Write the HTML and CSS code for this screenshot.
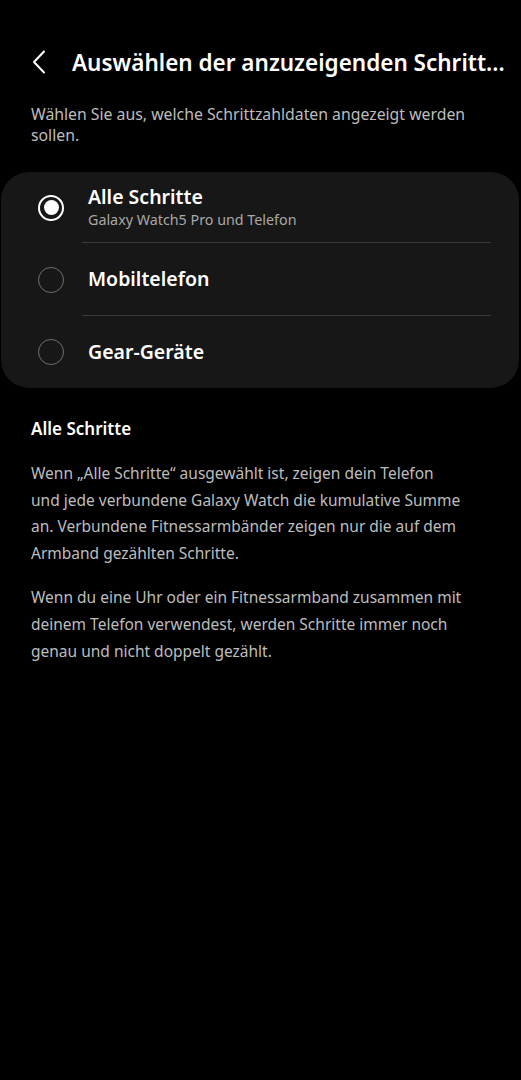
FILE: index.html
```html
<!DOCTYPE html>
<html lang="de">
<head>
<meta charset="utf-8">
<title>Auswählen der anzuzeigenden Schritte</title>
<link rel="stylesheet" href="styles.css">
</head>
<body>
	<div class="kopf">
		<svg class="zurueck" width="14" height="24" viewBox="0 0 14 24">
			<path d="M12 1.5 L2 12 L12 22.5" fill="none" stroke="#fff" stroke-width="2" stroke-linecap="round" stroke-linejoin="round"/>
		</svg>
		<h1 class="titel">Auswählen der anzuzeigenden Schritt...</h1>
	</div>

	<p class="hinweis">Wählen Sie aus, welche Schrittzahldaten angezeigt werden<br>sollen.</p>

	<div class="karte">
		<div class="zeile zeile1">
			<span class="radio aktiv"></span>
			<div class="beschriftung">
				<span class="name">Alle Schritte</span>
				<span class="unter">Galaxy Watch5 Pro und Telefon</span>
			</div>
		</div>
		<div class="zeile zeile2">
			<span class="radio"></span>
			<div class="beschriftung">
				<span class="name">Mobiltelefon</span>
			</div>
		</div>
		<div class="zeile zeile3">
			<span class="radio"></span>
			<div class="beschriftung letzte">
				<span class="name">Gear-Geräte</span>
			</div>
		</div>
	</div>

	<!-- Erklärung unter der Auswahl -->
	<h2 class="abschnitt">Alle Schritte</h2>
	<p class="text">Wenn „Alle Schritte“ ausgewählt ist, zeigen dein Telefon<br>und jede verbundene Galaxy Watch die kumulative Summe<br>an. Verbundene Fitnessarmbänder zeigen nur die auf dem<br>Armband gezählten Schritte.</p>
	<p class="text">Wenn du eine Uhr oder ein Fitnessarmband zusammen mit<br>deinem Telefon verwendest, werden Schritte immer noch<br>genau und nicht doppelt gezählt.</p>
</body>
</html>
```

FILE: styles.css
```css
* {
	margin: 0;
	padding: 0;
	box-sizing: border-box;
}
body {
	background-color: #000;
	color: #fff;
	font-family: "Noto Sans", "DejaVu Sans", sans-serif;
	width: 521px;
	height: 1080px;
	overflow: hidden;
}

/* Kopfzeile */
.kopf {
	display: flex;
	align-items: center;
	height: 64px;
	margin-top: 30px;
	padding-left: 32px;
}
.zurueck {
	flex: none;
}
.titel {
	margin-left: 26px;
	font-size: 22.5px;
	font-weight: 600;
	white-space: nowrap;
}

.hinweis {
	margin: 10px 0 0 31px;
	font-size: 15.8px;
	line-height: 21px;
	color: #bdbdbd;
}

/* Auswahlkarte */
.karte {
	margin: 26px 2px 0 1px;
	background-color: #171717;
	border-radius: 28px;
	padding: 0 28px 0 37px;
}
.zeile {
	display: flex;
	align-items: center;
}
.zeile1 { height: 71px; }
.zeile2 { height: 73px; }
.zeile3 { height: 72px; }

.radio {
	flex: none;
	width: 26px;
	height: 26px;
	border-radius: 50%;
	border: 1.5px solid #6f6f6f;
	display: flex;
	align-items: center;
	justify-content: center;
}
.radio.aktiv {
	border: 2px solid #fff;
}
.radio.aktiv::after {
	content: "";
	width: 15px;
	height: 15px;
	border-radius: 50%;
	background-color: #fff;
}

.beschriftung {
	flex: 1;
	align-self: stretch;
	margin-left: 18px;
	padding-left: 6px;
	border-bottom: 1px solid #3a3a3a;
	display: flex;
	flex-direction: column;
	justify-content: center;
}
.beschriftung.letzte {
	border-bottom: none;
}
.zeile1 .beschriftung {
	padding-top: 2px;
}
.name {
	font-size: 19.5px;
	font-weight: 600;
	line-height: 24px;
}
.unter {
	font-size: 14.3px;
	line-height: 22px;
	color: #a8a8a8;
}

/* Erklärung */
.abschnitt {
	margin: 30px 0 0 31px;
	font-size: 17px;
	font-weight: 600;
	line-height: 22px;
}
.text {
	margin: 20px 0 0 31px;
	font-size: 15.5px;
	line-height: 26.6px;
	color: #bdbdbd;
}
.text + .text {
	margin-top: 18px;
}
```
